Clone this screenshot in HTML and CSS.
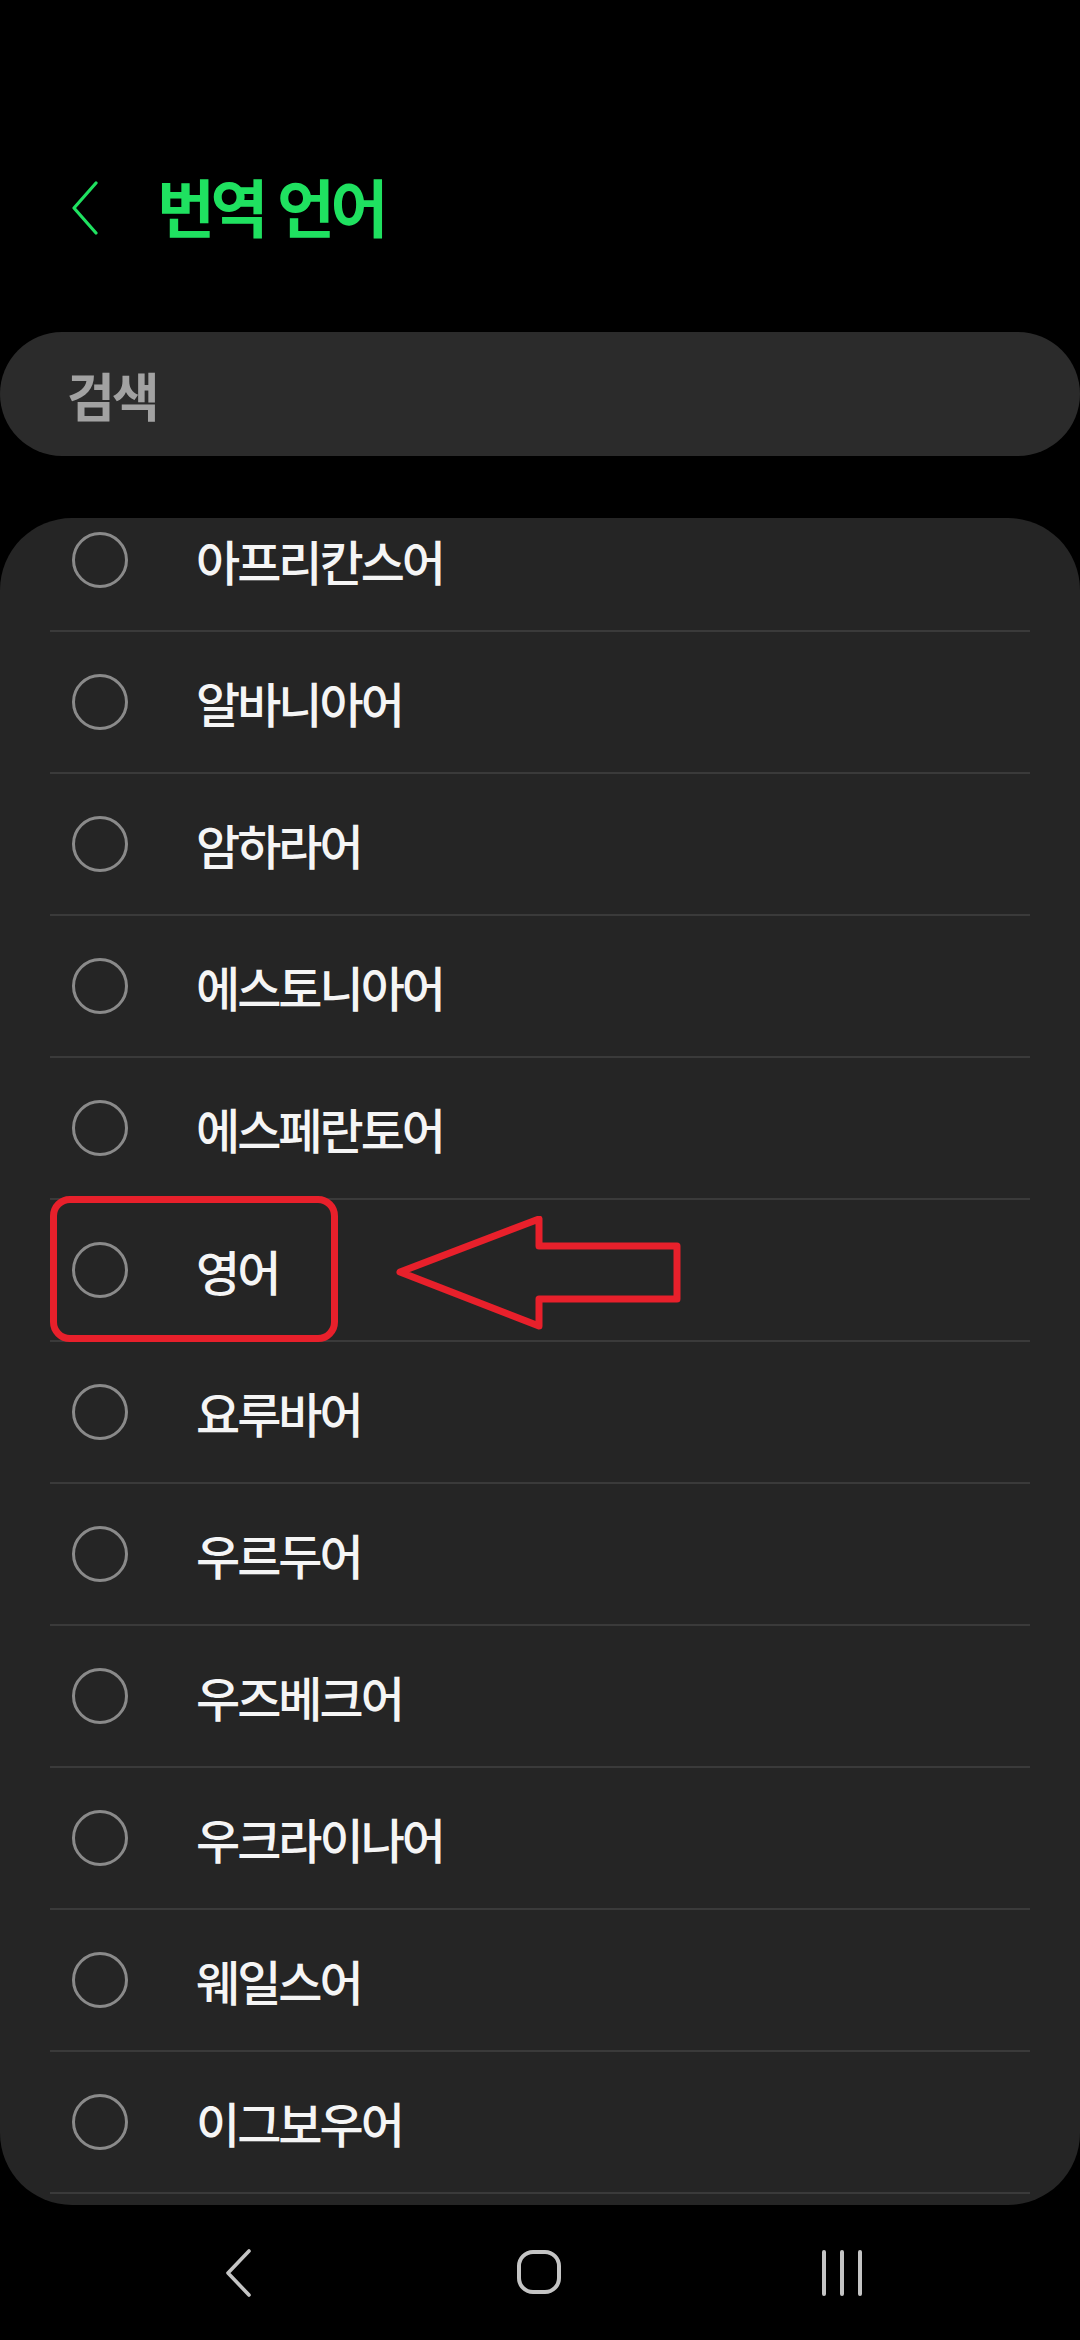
FILE: index.html
```html
<!DOCTYPE html>
<html lang="ko">
<head>
<meta charset="utf-8">
<title>번역 언어</title>
<link rel="stylesheet" href="styles.css">
</head>
<body>
<div class="screen">
  <header class="header">
    <svg class="back" width="28" height="54" viewBox="0 0 28 54"><path d="M25 2 L3 27 L25 52" fill="none" stroke="#1fe160" stroke-width="3.2" stroke-linecap="round" stroke-linejoin="round"/></svg>
    <h1 class="title">번역 언어</h1>
  </header>

  <div class="search"><span class="search-text">검색</span></div>

  <div class="card">
    <ul class="list">
      <li class="row"><span class="radio"></span><span class="label">아프리칸스어</span></li>
      <li class="row"><span class="radio"></span><span class="label">알바니아어</span></li>
      <li class="row"><span class="radio"></span><span class="label">암하라어</span></li>
      <li class="row"><span class="radio"></span><span class="label">에스토니아어</span></li>
      <li class="row"><span class="radio"></span><span class="label">에스페란토어</span></li>
      <li class="row marked"><span class="radio"></span><span class="label">영어</span>
        <span class="highlight"></span>
        <svg class="pointer" width="300" height="120" viewBox="0 0 300 120"><path d="M10 56 L149 3 L149 30 L287 30 L287 83 L149 83 L149 110 Z" fill="none" stroke="#e8202b" stroke-width="7" stroke-linejoin="round"/></svg>
      </li>
      <li class="row"><span class="radio"></span><span class="label">요루바어</span></li>
      <li class="row"><span class="radio"></span><span class="label">우르두어</span></li>
      <li class="row"><span class="radio"></span><span class="label">우즈베크어</span></li>
      <li class="row"><span class="radio"></span><span class="label">우크라이나어</span></li>
      <li class="row"><span class="radio"></span><span class="label">웨일스어</span></li>
      <li class="row"><span class="radio"></span><span class="label">이그보우어</span></li>
    </ul>
  </div>

  <nav class="navbar">
    <div class="nav-item">
      <svg width="30" height="50" viewBox="0 0 30 50"><path d="M26 3 L5 25 L26 47" fill="none" stroke="#c4c4c4" stroke-width="3.6" stroke-linecap="round" stroke-linejoin="round"/></svg>
    </div>
    <div class="nav-item">
      <svg width="48" height="48" viewBox="0 0 48 48"><rect x="3" y="3" width="40" height="40" rx="14" fill="none" stroke="#c4c4c4" stroke-width="4"/></svg>
    </div>
    <div class="nav-item">
      <svg width="44" height="48" viewBox="0 0 44 48"><path d="M4 3 V45 M22 3 V45 M40 3 V45" fill="none" stroke="#c4c4c4" stroke-width="4" stroke-linecap="round"/></svg>
    </div>
  </nav>
</div>
</body>
</html>
```

FILE: styles.css
```css
* { box-sizing: border-box; }
html, body {
  margin: 0;
  padding: 0;
  background: #000;
}
body {
  font-family: "Noto Sans CJK KR", "Noto Sans", sans-serif;
  color: #f5f5f5;
}
.screen {
  width: 1080px;
  height: 2340px;
  display: flex;
  flex-direction: column;
  overflow: hidden;
}
.header {
  height: 122px;
  margin-top: 147px;
  display: flex;
  align-items: center;
  padding-left: 71px;
}
.back { display: block; }
.title {
  margin: 0 0 0 58px;
  padding-bottom: 8px;
  font-size: 63px;
  font-weight: 700;
  letter-spacing: -4.5px;
  color: #1fe160;
  line-height: 1;
}
.search {
  margin-top: 63px;
  height: 124px;
  border-radius: 62px;
  background: #2b2b2b;
  display: flex;
  align-items: center;
  padding-left: 67px;
}
.search-text {
  font-size: 52px;
  font-weight: 700;
  letter-spacing: -3px;
  color: #a2a2a2;
}
.card {
  margin-top: 62px;
  height: 1687px;
  border-radius: 72px;
  background: #252525;
  overflow: hidden;
}
.list {
  list-style: none;
  margin: -28px 0 0;
  padding: 0;
}
.row {
  position: relative;
  height: 142px;
  margin: 0 50px;
  padding-left: 22px;
  display: flex;
  align-items: center;
  border-bottom: 2px solid #3a3a3a;
}
.radio {
  width: 56px;
  height: 56px;
  border-radius: 50%;
  border: 3px solid #8a8a8a;
  flex: none;
}
.label {
  margin-left: 68px;
  font-size: 48px;
  font-weight: 500;
  letter-spacing: -3px;
  line-height: 1;
}
.highlight {
  position: absolute;
  left: 0;
  top: -4px;
  width: 288px;
  height: 146px;
  border: 7px solid #e8202b;
  border-radius: 20px;
}
.pointer {
  position: absolute;
  left: 340px;
  top: 16px;
}
.navbar {
  flex: 1;
  display: flex;
  justify-content: center;
  align-items: center;
}
.nav-item {
  width: 302px;
  display: flex;
  justify-content: center;
  align-items: center;
}
```
